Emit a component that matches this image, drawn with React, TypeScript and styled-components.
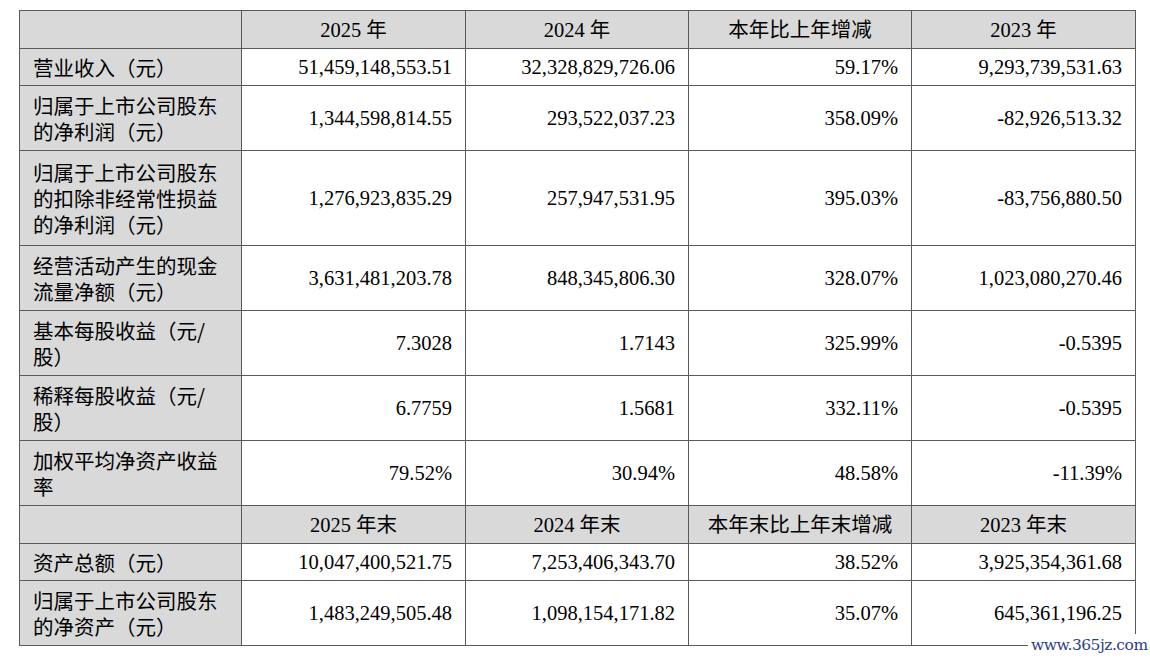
import React from 'react';
import styled, { createGlobalStyle } from 'styled-components';

const GlobalStyle = createGlobalStyle`
  html, body {
    margin: 0;
    padding: 0;
    background: #ffffff;
  }
  body {
    width: 1150px;
    height: 658px;
    overflow: hidden;
  }
`;

type DataRow = {
  label: string[];
  values: string[];
  height: number;
};

const firstBlock: DataRow[] = [
  { label: ['营业收入（元）'], values: ['51,459,148,553.51', '32,328,829,726.06', '59.17%', '9,293,739,531.63'], height: 37 },
  { label: ['归属于上市公司股东', '的净利润（元）'], values: ['1,344,598,814.55', '293,522,037.23', '358.09%', '-82,926,513.32'], height: 65 },
  { label: ['归属于上市公司股东', '的扣除非经常性损益', '的净利润（元）'], values: ['1,276,923,835.29', '257,947,531.95', '395.03%', '-83,756,880.50'], height: 95 },
  { label: ['经营活动产生的现金', '流量净额（元）'], values: ['3,631,481,203.78', '848,345,806.30', '328.07%', '1,023,080,270.46'], height: 65 },
  { label: ['基本每股收益（元/', '股）'], values: ['7.3028', '1.7143', '325.99%', '-0.5395'], height: 65 },
  { label: ['稀释每股收益（元/', '股）'], values: ['6.7759', '1.5681', '332.11%', '-0.5395'], height: 65 },
  { label: ['加权平均净资产收益', '率'], values: ['79.52%', '30.94%', '48.58%', '-11.39%'], height: 65 },
];

const secondBlock: DataRow[] = [
  { label: ['资产总额（元）'], values: ['10,047,400,521.75', '7,253,406,343.70', '38.52%', '3,925,354,361.68'], height: 37 },
  { label: ['归属于上市公司股东', '的净资产（元）'], values: ['1,483,249,505.48', '1,098,154,171.82', '35.07%', '645,361,196.25'], height: 65 },
];

const yearHeads = ['2025 年', '2024 年', '本年比上年增减', '2023 年'];
const yearEndHeads = ['2025 年末', '2024 年末', '本年末比上年末增减', '2023 年末'];

const App: React.FC = () => {
  const renderHead = (heads: string[]) => (
    <Row $height={38}>
      <HeadCell />
      {heads.map((h) => (
        <HeadCell key={h}>{h}</HeadCell>
      ))}
    </Row>
  );

  const renderRows = (rows: DataRow[]) =>
    rows.map((row) => (
      <Row key={row.label.join('')} $height={row.height}>
        <LabelCell>
          {row.label.map((line, i) => (
            <LabelLine key={i}>{line}</LabelLine>
          ))}
        </LabelCell>
        {row.values.map((v, i) => (
          <ValueCell key={i}>{v}</ValueCell>
        ))}
      </Row>
    ));

  return (
    <Page>
      <GlobalStyle />
      <Table>
        <colgroup>
          <col style={{ width: 222 }} />
          <col style={{ width: 224 }} />
          <col style={{ width: 223 }} />
          <col style={{ width: 223 }} />
          <col style={{ width: 224 }} />
        </colgroup>
        <tbody>
          {renderHead(yearHeads)}
          {renderRows(firstBlock)}
          {renderHead(yearEndHeads)}
          {renderRows(secondBlock)}
        </tbody>
      </Table>
      <Watermark>www.365jz.com</Watermark>
    </Page>
  );
};

const Page = styled.div`
  position: relative;
  width: 1150px;
  height: 658px;
  padding: 10px 0 0 19px;
  box-sizing: border-box;
  color: #000000;
  font-family: 'Liberation Serif', 'Noto Sans CJK SC', serif;
`;

const Table = styled.table`
  border-collapse: collapse;
  table-layout: fixed;
  width: 1117px;
  border: 1px solid #4a4a4a;
`;

const Row = styled.tr<{ $height: number }>`
  height: ${(p) => p.$height}px;
`;

const cellBase = `
  border: 1px solid #5a5a5a;
  font-size: 20.5px;
  line-height: 26px;
  vertical-align: middle;
  box-sizing: border-box;
`;

const HeadCell = styled.td`
  ${cellBase}
  background: #d9d9d9;
  text-align: center;
  padding: 0 6px;
  font-family: 'Liberation Serif', 'Noto Sans CJK SC', serif;
`;

const LabelCell = styled.td`
  ${cellBase}
  background: #d9d9d9;
  text-align: left;
  padding: 0 10px 0 13px;
  font-family: 'Noto Sans CJK SC', sans-serif;
`;

const LabelLine = styled.div`
  white-space: nowrap;
`;

const ValueCell = styled.td`
  ${cellBase}
  background: #ffffff;
  text-align: right;
  padding: 0 13px 0 6px;
  white-space: nowrap;
  font-family: 'Liberation Serif', serif;
`;

const Watermark = styled.div`
  position: absolute;
  right: 0;
  bottom: 0;
  width: 122px;
  height: 24px;
  padding: 1px 0 0 3px;
  box-sizing: border-box;
  background: #ffffff;
  color: #2b408c;
  font-family: 'DejaVu Serif', serif;
  font-size: 15.5px;
  letter-spacing: -0.5px;
  line-height: 20px;
`;

export default App;
